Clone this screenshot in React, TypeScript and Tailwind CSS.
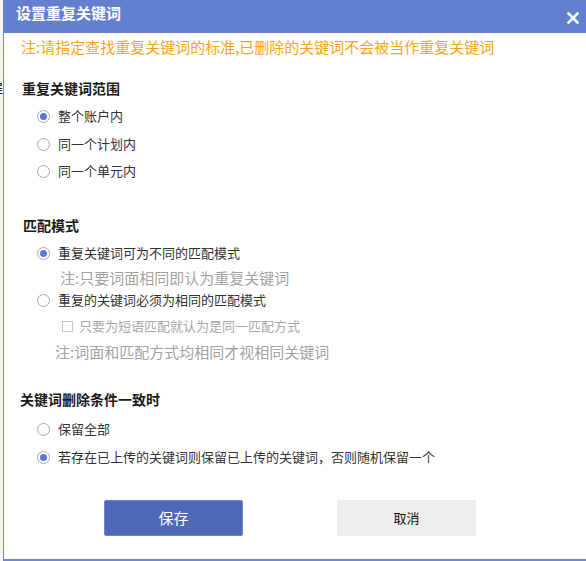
import React from "react";

const FONT = { fontFamily: '"Microsoft YaHei", "Noto Sans CJK SC", "Noto Sans", sans-serif' };

function Radio({ checked, label, className = "" }: { checked?: boolean; label: string; className?: string }) {
  return (
    <div className={"flex items-center h-[20px] ml-[33px] " + className}>
      <span className="w-[13px] h-[13px] rounded-full border border-[#a8a8a8] bg-white flex items-center justify-center shrink-0">
        {checked && <span className="w-[7px] h-[7px] rounded-full bg-[#5b78d3]" />}
      </span>
      <span className="ml-[8px] text-[13px] leading-[20px] text-[#333333] whitespace-nowrap">{label}</span>
    </div>
  );
}

export default function App() {
  return (
    <div className="w-[586px] h-[561px] flex bg-white overflow-hidden" style={FONT}>
      <div className="w-[3px] shrink-0 bg-[#f4f4f4] overflow-hidden flex justify-end">
        <span className="shrink-0 mt-[78px] text-[14px] leading-[20px] text-[#222] whitespace-nowrap">罪</span>
      </div>
      <div className="flex-1 h-[561px] flex flex-col border-l border-b-2 border-[#6f86d1]">
        <div className="h-[33px] shrink-0 bg-[#6380cf] flex items-start justify-between pl-[12px] pr-[7px]">
          <span className="mt-[3px] text-[15px] leading-[20px] font-bold text-white">设置重复关键词</span>
          <svg className="mt-[12px]" width="12" height="12" viewBox="0 0 12 12">
            <path d="M1.5 1.5 L10.5 10.5 M10.5 1.5 L1.5 10.5" stroke="white" strokeWidth="2.6" strokeLinecap="square" />
          </svg>
        </div>

        <div className="mt-[4px] pl-[17px] text-[15px] leading-[20px] text-[#f7a521] whitespace-nowrap">
          注:请指定查找重复关键词的标准,已删除的关键词不会被当作重复关键词
        </div>

        <div className="mt-[21px] pl-[18px] text-[14px] leading-[20px] font-bold text-[#1a1a1a]">重复关键词范围</div>
        <Radio className="mt-[8px]" checked label="整个账户内" />
        <Radio className="mt-[8px]" label="同一个计划内" />
        <Radio className="mt-[7px]" label="同一个单元内" />

        <div className="mt-[34px] pl-[19px] text-[14px] leading-[20px] font-bold text-[#1a1a1a]">匹配模式</div>
        <Radio className="mt-[8px]" checked label="重复关键词可为不同的匹配模式" />
        <div className="mt-[5px] pl-[56px] text-[15px] leading-[20px] text-[#a3a3a3] whitespace-nowrap">注:只要词面相同即认为重复关键词</div>
        <Radio className="mt-[2px]" label="重复的关键词必须为相同的匹配模式" />
        <div className="mt-[6px] ml-[58px] flex items-center h-[20px]">
          <span className="w-[11px] h-[11px] border border-[#c8c8c8] bg-white shrink-0" />
          <span className="ml-[6px] text-[13px] leading-[20px] text-[#a8a8a8] whitespace-nowrap">只要为短语匹配就认为是同一匹配方式</span>
        </div>
        <div className="mt-[6px] pl-[51px] text-[15px] leading-[20px] text-[#a3a3a3] whitespace-nowrap">注:词面和匹配方式均相同才视相同关键词</div>

        <div className="mt-[27px] pl-[16px] text-[14px] leading-[20px] font-bold text-[#1a1a1a]">关键词删除条件一致时</div>
        <Radio className="mt-[10px]" label="保留全部" />
        <Radio className="mt-[8px]" checked label="若存在已上传的关键词则保留已上传的关键词，否则随机保留一个" />

        <div className="mt-[33px] ml-[100px] flex gap-[94px]">
          <button className="w-[139px] h-[36px] rounded-[2px] bg-[#5068b6] border border-[#6a84d6] text-white text-[15px] leading-[20px] flex items-center justify-center">
            保存
          </button>
          <button className="w-[139px] h-[36px] bg-[#eeeeee] text-[#111] text-[13px] leading-[20px] flex items-center justify-center">
            取消
          </button>
        </div>
      </div>
    </div>
  );
}
